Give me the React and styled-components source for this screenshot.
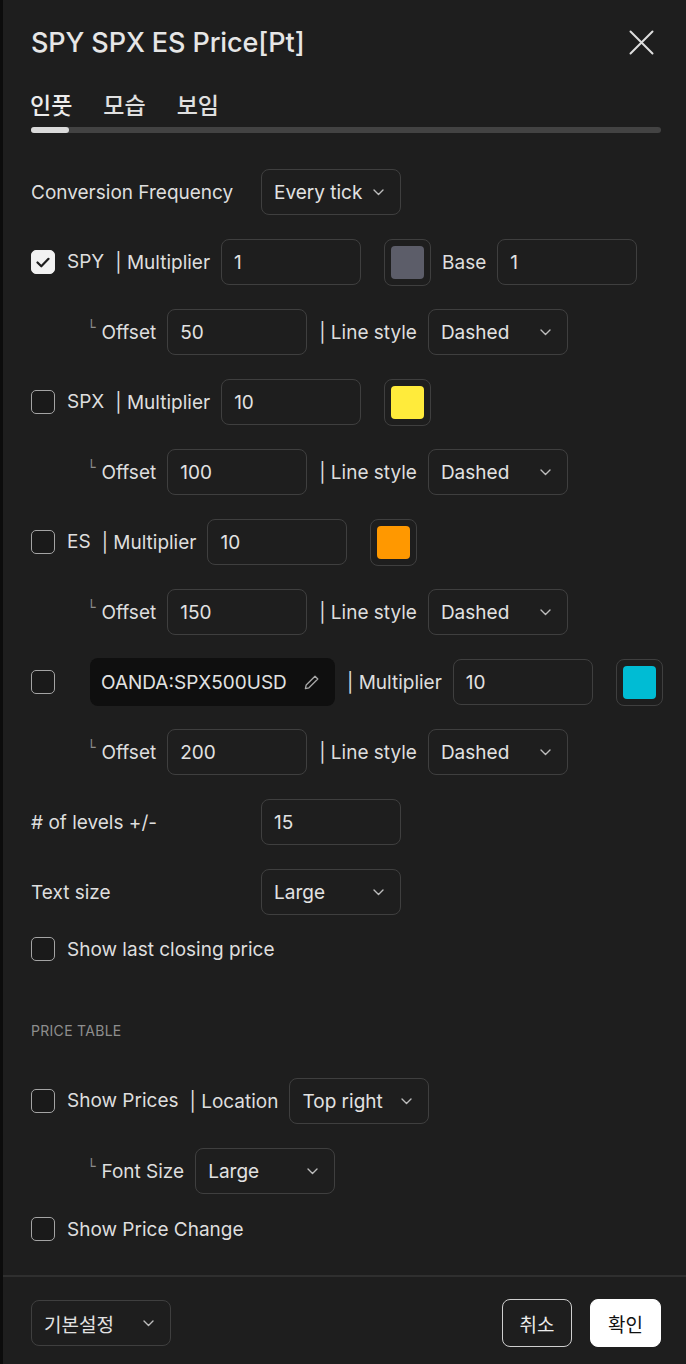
import React from 'react';
import styled, { createGlobalStyle } from 'styled-components';

const GlobalStyle = createGlobalStyle`
  html, body {
    margin: 0;
    padding: 0;
    background: #0c0c0c;
  }
  body {
    font-family: Inter, "Noto Sans", "Noto Sans CJK KR", sans-serif;
    color: #dcdcdc;
    -webkit-font-smoothing: antialiased;
  }
  * { box-sizing: border-box; }
`;

const swatches = {
  gray: '#5c5d69',
  yellow: '#ffeb3b',
  orange: '#ff9800',
  cyan: '#00bcd4',
};

function Chevron() {
  return (
    <svg width="11" height="7" viewBox="0 0 11 7" fill="none">
      <path d="M1 1l4.5 4.5L10 1" stroke="#bdbdbd" strokeWidth="1.4" strokeLinecap="round" strokeLinejoin="round" />
    </svg>
  );
}

function CloseIcon() {
  return (
    <svg width="25" height="25" viewBox="0 0 25 25" fill="none">
      <path d="M1.5 1.5l22 22M23.5 1.5l-22 22" stroke="#dedede" strokeWidth="2" strokeLinecap="round" />
    </svg>
  );
}

function CheckMark() {
  return (
    <svg width="14" height="11" viewBox="0 0 14 11" fill="none">
      <path d="M1.5 5.5l3.8 3.8L12.5 1.8" stroke="#1e1e1e" strokeWidth="2.2" strokeLinecap="round" strokeLinejoin="round" />
    </svg>
  );
}

function PencilIcon() {
  return (
    <svg width="17" height="17" viewBox="0 0 17 17" fill="none">
      <path d="M12 2.2l2.8 2.8L6 13.8l-3.6.8.8-3.6z" stroke="#a8a8a8" strokeWidth="1.3" strokeLinejoin="round" />
    </svg>
  );
}

const Page = styled.div`
  padding-left: 3px;
  min-height: 1364px;
`;

const Dialog = styled.div`
  background: #1e1e1e;
  min-height: 1364px;
  display: flex;
  flex-direction: column;
`;

const Header = styled.div`
  display: flex;
  align-items: center;
  justify-content: space-between;
  padding: 26px 32px 0 28px;
  height: 58px;
`;

const Title = styled.h1`
  margin: 0;
  font-size: 27px;
  font-weight: 500;
  color: #e6e6e6;
  letter-spacing: -0.1px;
`;

const CloseButton = styled.button`
  background: none;
  border: none;
  padding: 0;
  display: flex;
  cursor: pointer;
`;

const Tabs = styled.div`
  display: flex;
  gap: 31px;
  padding: 32px 0 0 27px;
`;

const Tab = styled.div`
  font-size: 23px;
  font-weight: 500;
  color: ${(p) => (p.$active ? '#ececec' : '#e0e0e0')};
  font-family: "Noto Sans CJK KR", sans-serif;
  line-height: 28px;
`;

const Track = styled.div`
  margin: 9px 25px 0 28px;
  height: 6px;
  border-radius: 3px;
  background: #434343;
`;

const TrackThumb = styled.div`
  width: 38px;
  height: 6px;
  border-radius: 3px;
  background: #dadada;
`;

const Body = styled.div`
  padding: 36px 25px 0 28px;
  display: flex;
  flex-direction: column;
  gap: 24px;
`;

const Row = styled.div`
  display: flex;
  align-items: center;
  height: ${(p) => (p.$compact ? '24px' : '46px')};
  padding-left: ${(p) => (p.$indent ? '56px' : '0')};
  margin-top: ${(p) => p.$mt || 0}px;
`;

const Label = styled.span`
  font-size: 19px;
  color: #dedede;
  white-space: nowrap;
  flex-shrink: 0;
  width: ${(p) => (p.$col ? '230px' : 'auto')};
  margin-right: ${(p) => (p.$mr !== undefined ? p.$mr : 11)}px;
  position: relative;
  top: ${(p) => (p.$up ? '-1px' : '0')};
`;

const Corner = styled.span`
  font-family: "DejaVu Sans", sans-serif;
  font-size: 14px;
  line-height: 14px;
  color: #8c8c8c;
  margin-right: 6px;
  position: relative;
  top: -5px;
`;

const Input = styled.div`
  width: ${(p) => p.$w || 140}px;
  height: 46px;
  flex-shrink: 0;
  border: 1px solid #3f3f3f;
  border-radius: 8px;
  display: flex;
  align-items: center;
  justify-content: space-between;
  padding: 0 16px 0 12px;
  font-size: 19px;
  color: #e2e2e2;
  margin-right: ${(p) => (p.$mr !== undefined ? p.$mr : 11)}px;
  font-family: Inter, "Noto Sans CJK KR", sans-serif;
`;

const Swatch = styled.div`
  width: 47px;
  height: 47px;
  flex-shrink: 0;
  border: 1px solid #3f3f3f;
  border-radius: 8px;
  margin: 0 11px 0 12px;
  display: flex;
  align-items: center;
  justify-content: center;
  &::after {
    content: '';
    width: 33px;
    height: 33px;
    border-radius: 4px;
    background: ${(p) => p.$color};
  }
`;

const Check = styled.div`
  width: 24px;
  height: 24px;
  border-radius: 5px;
  border: 1px solid ${(p) => (p.$on ? '#f0f0f0' : '#a4a4a4')};
  background: ${(p) => (p.$on ? '#f2f2f2' : '#1a1a1a')};
  display: flex;
  align-items: center;
  justify-content: center;
  margin-right: 12px;
  flex-shrink: 0;
`;

const SymbolChip = styled.div`
  margin-left: 23px;
  margin-right: 12px;
  width: 245px;
  height: 48px;
  flex-shrink: 0;
  border-radius: 8px;
  background: #0f0f0f;
  display: flex;
  align-items: center;
  justify-content: space-between;
  padding: 0 15px 0 11px;
  font-size: 19px;
  color: #e2e2e2;
`;

const Section = styled.div`
  font-size: 14px;
  line-height: 16px;
  color: #8e8e8e;
  letter-spacing: 0.3px;
  margin-top: 38px;
  margin-bottom: 15px;
`;

const Divider = styled.div`
  height: 2px;
  background: #2f2f2f;
  margin-top: 34px;
`;

const Footer = styled.div`
  display: flex;
  align-items: center;
  justify-content: space-between;
  padding: 22px 25px 17px 28px;
`;

const Buttons = styled.div`
  display: flex;
  gap: 18px;
`;

const Button = styled.button`
  height: 48px;
  padding: 0 14px;
  border-radius: 8px;
  font-size: 19px;
  font-family: "Noto Sans CJK KR", sans-serif;
  border: 1px solid ${(p) => (p.$primary ? '#ffffff' : '#cfcfcf')};
  background: ${(p) => (p.$primary ? '#ffffff' : 'transparent')};
  color: ${(p) => (p.$primary ? '#111111' : '#ececec')};
  width: ${(p) => (p.$primary ? '71px' : '70px')};
`;

const KoreanValue = styled.span`
  font-family: "Noto Sans CJK KR", sans-serif;
`;

function Select({ value, w, mr }) {
  return (
    <Input $w={w} $mr={mr}>
      <span>{value}</span>
      <Chevron />
    </Input>
  );
}

function SubRow({ offset }) {
  return (
    <Row $indent>
      <Corner>└</Corner>
      <Label>Offset</Label>
      <Input $mr={12}>{offset}</Input>
      <Label>| Line style</Label>
      <Select value="Dashed" />
    </Row>
  );
}

export default function App() {
  return (
    <>
      <GlobalStyle />
      <Page>
        <Dialog>
          <Header>
            <Title>SPY SPX ES Price[Pt]</Title>
            <CloseButton>
              <CloseIcon />
            </CloseButton>
          </Header>
          <Tabs>
            <Tab $active>인풋</Tab>
            <Tab>모습</Tab>
            <Tab>보임</Tab>
          </Tabs>
          <Track>
            <TrackThumb />
          </Track>

          <Body>
            <Row>
              <Label $col $mr={0}>Conversion Frequency</Label>
              <Select value="Every tick" />
            </Row>

            <Row>
              <Check $on><CheckMark /></Check>
              <Label $up>SPY</Label>
              <Label>| Multiplier</Label>
              <Input>1</Input>
              <Swatch $color={swatches.gray} />
              <Label>Base</Label>
              <Input>1</Input>
            </Row>
            <SubRow offset="50" />

            <Row>
              <Check />
              <Label $up>SPX</Label>
              <Label>| Multiplier</Label>
              <Input>10</Input>
              <Swatch $color={swatches.yellow} />
            </Row>
            <SubRow offset="100" />

            <Row>
              <Check />
              <Label $up>ES</Label>
              <Label>| Multiplier</Label>
              <Input>10</Input>
              <Swatch $color={swatches.orange} />
            </Row>
            <SubRow offset="150" />

            <Row>
              <Check />
              <SymbolChip>
                <span>OANDA:SPX500USD</span>
                <PencilIcon />
              </SymbolChip>
              <Label>| Multiplier</Label>
              <Input>10</Input>
              <Swatch $color={swatches.cyan} />
            </Row>
            <SubRow offset="200" />

            <Row>
              <Label $col $mr={0}># of levels +/-</Label>
              <Input>15</Input>
            </Row>
            <Row>
              <Label $col $mr={0}>Text size</Label>
              <Select value="Large" />
            </Row>
            <Row $compact $mt={-2}>
              <Check />
              <Label>Show last closing price</Label>
            </Row>

            <Section>PRICE TABLE</Section>

            <Row>
              <Check />
              <Label $up>Show Prices</Label>
              <Label>| Location</Label>
              <Select value="Top right" />
            </Row>
            <Row $indent>
              <Corner>└</Corner>
              <Label>Font Size</Label>
              <Select value="Large" />
            </Row>
            <Row $compact $mt={-1}>
              <Check />
              <Label>Show Price Change</Label>
            </Row>
          </Body>

          <Divider />
          <Footer>
            <Input $w={140}>
              <KoreanValue>기본설정</KoreanValue>
              <Chevron />
            </Input>
            <Buttons>
              <Button>취소</Button>
              <Button $primary>확인</Button>
            </Buttons>
          </Footer>
        </Dialog>
      </Page>
    </>
  );
}
